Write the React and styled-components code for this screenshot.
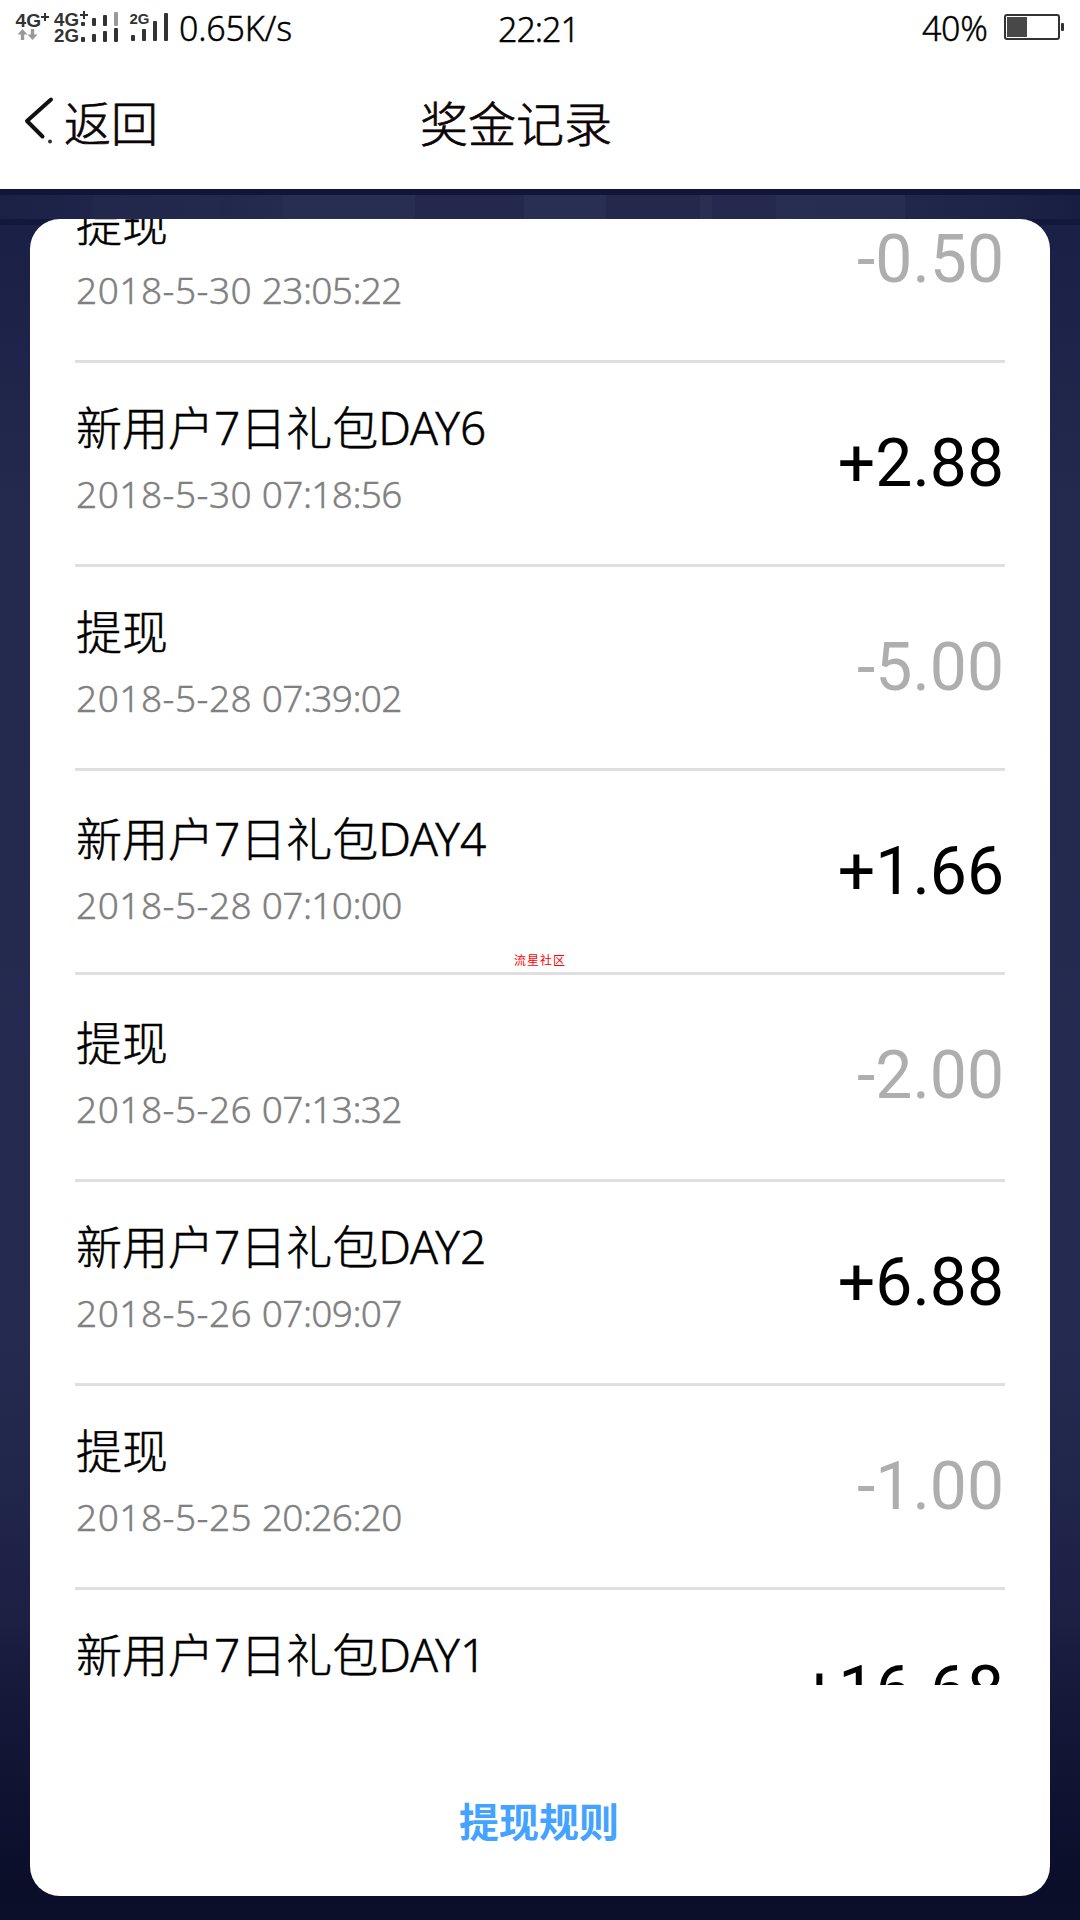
import React from 'react';
// Style
import styled, { createGlobalStyle } from 'styled-components';

const records = [
  { title: '提现', date: '2018-5-30', time: '23:05:22', amount: '-0.50' },
  { title: '新用户7日礼包DAY6', date: '2018-5-30', time: '07:18:56', amount: '+2.88' },
  { title: '提现', date: '2018-5-28', time: '07:39:02', amount: '-5.00' },
  { title: '新用户7日礼包DAY4', date: '2018-5-28', time: '07:10:00', amount: '+1.66', shift: 3 },
  { title: '提现', date: '2018-5-26', time: '07:13:32', amount: '-2.00', shift: 3, height: 207 },
  { title: '新用户7日礼包DAY2', date: '2018-5-26', time: '07:09:07', amount: '+6.88' },
  { title: '提现', date: '2018-5-25', time: '20:26:20', amount: '-1.00' },
  { title: '新用户7日礼包DAY1', amount: '+16.68' },
];

const Signal = () => (
  <SignalIcon viewBox='0 0 172 48'>
    <g fill='#333' fontFamily='Liberation Sans, sans-serif' fontWeight='700'>
      <text x='15.5' y='26.5' fontSize='19' textLength='25.5' lengthAdjust='spacingAndGlyphs'>4G</text>
      <text x='54' y='25.5' fontSize='18.5' textLength='25' lengthAdjust='spacingAndGlyphs'>4G</text>
      <text x='54' y='41.5' fontSize='18' textLength='25' lengthAdjust='spacingAndGlyphs'>2G</text>
      <text x='129.5' y='24' fontSize='15' textLength='20' lengthAdjust='spacingAndGlyphs'>2G</text>
    </g>
    <path d='M45 13v8M41 17h8M84 11v8M80 15h8' stroke='#333' strokeWidth='2' />
    <path d='M22.5 29l5 5.5h-3.3V40h-3.4v-5.5h-3.3zM32.5 40l-5-5.5h3.3V29h3.4v5.5h3.3z' fill='#999' />
    <g fill='#333'>
      <rect x='81' y='22' width='4' height='4' rx='1' />
      <rect x='92' y='18' width='4' height='8' rx='1' />
      <rect x='103' y='15' width='4' height='11' rx='1' />
      <rect x='114' y='12' width='4' height='14' rx='1' fill='#999' />
      <rect x='81' y='37' width='4' height='5' rx='1' />
      <rect x='92' y='34' width='4' height='8' rx='1' />
      <rect x='103' y='31' width='4' height='11' rx='1' />
      <rect x='114' y='28' width='4' height='14' rx='1' />
      <rect x='131' y='35' width='4' height='6' rx='1' />
      <rect x='142' y='29' width='4' height='12' rx='1' />
      <rect x='153' y='21' width='4' height='20' rx='1' />
      <rect x='164' y='13' width='4' height='28' rx='1' />
    </g>
  </SignalIcon>
);

const App = () => {
  return (
    <Page>
      <GlobalStyle />
      <StatusBar>
        <Signal />
        <Speed>0.65K/s</Speed>
        <Clock>22:21</Clock>
        <Percent>40%</Percent>
        <Battery viewBox='0 0 60 26'>
          <rect x='1' y='1' width='54' height='24' rx='2' fill='none' stroke='#333' strokeWidth='2' />
          <rect x='3' y='3' width='20' height='20' fill='#484848' />
          <rect x='57' y='9' width='3' height='8' rx='1' fill='#333' />
        </Battery>
      </StatusBar>
      <Header>
        <Chevron viewBox='0 0 34 52'>
          <path d='M29 6.5L5 28L20.5 43.5' fill='none' stroke='#111' strokeWidth='4' strokeLinecap='round' strokeLinejoin='round' />
          <circle cx='28' cy='48.5' r='2' fill='#333' />
        </Chevron>
        <Back>返回</Back>
        <Heading>奖金记录</Heading>
      </Header>
      <Backdrop>
        <Card>
          <Viewport>
            <List>
              {records.map(({ title, date, time, amount, shift, height }) => (
                <Row key={amount} $height={height}>
                  <Info $shift={shift}>
                    <Title>{title}</Title>
                    {date && (
                      <Stamp>
                        <Day>{date}</Day> <Time>{time}</Time>
                      </Stamp>
                    )}
                  </Info>
                  <Amount $income={amount.startsWith('+')}>{amount}</Amount>
                </Row>
              ))}
            </List>
          </Viewport>
          <Rules>提现规则</Rules>
        </Card>
      </Backdrop>
      <Watermark>流星社区</Watermark>
    </Page>
  );
};

const GlobalStyle = createGlobalStyle`
  * {
    margin: 0;
    padding: 0;
    box-sizing: border-box;
  }
  body {
    background: #fff;
    font-family: 'Noto Sans', 'Noto Sans CJK SC', sans-serif;
    font-weight: 300;
  }
`;

const Page = styled.div`
  position: relative;
  width: 1080px;
  height: 1920px;
  overflow: hidden;
  display: flex;
  flex-direction: column;
`;

const StatusBar = styled.div`
  display: flex;
  height: 56px;
  color: #000;
  font-size: 34px;
  line-height: 56px;
  white-space: nowrap;
  -webkit-text-stroke: 0.4px;
`;

const SignalIcon = styled.svg`
  width: 172px;
  height: 48px;
  -webkit-text-stroke: 0;
`;

const Speed = styled.span`
  width: 326px;
  padding-left: 7px;
  letter-spacing: -0.2px;
`;

const Clock = styled.span`
  width: 424px;
  padding-top: 1px;
  letter-spacing: -1px;
`;

const Percent = styled.span`
  width: 82px;
  letter-spacing: -0.3px;
`;

const Battery = styled.svg`
  width: 60px;
  height: 26px;
  margin-top: 14px;
`;

const Header = styled.header`
  display: flex;
  height: 133px;
  padding-left: 22px;
  font-family: 'Noto Sans CJK SC', sans-serif;
  font-size: 48px;
  line-height: 72px;
  color: #0d0405;
  -webkit-text-stroke: 0.7px;
`;

const Chevron = styled.svg`
  width: 34px;
  height: 52px;
  margin-top: 37px;
`;

const Back = styled.span`
  width: 356px;
  padding: 29px 0 0 8px;
  font-size: 47px;
`;

const Heading = styled.h1`
  padding: 29px 0 0 8px;
  font-size: 48px;
  font-weight: 300;
`;

// Night sky behind the card, darker towards the bottom
const Backdrop = styled.main`
  flex: 1;
  padding: 30px 30px 24px;
  background:
    linear-gradient(#0f163a, #0f163a) 0 0 / 100% 6px no-repeat,
    linear-gradient(
      90deg,
      #1b2045 0, #1f244a 93px, #22274c 93px, #23284d 221px,
      #22274c 221px, #252a4f 283px, #282d52 283px, #282d52 415px,
      #23284c 415px, #23284c 524px, #292e53 524px, #292e53 606px,
      #24294c 606px, #24294c 700px, #2a2f52 700px, #2a2f52 712px,
      #24294d 712px, #24294d 776px, #282d52 776px, #272c51 905px,
      #21264b 905px, #1e2348 995px, #1e2348 995px, #181d42 1080px
    ) 0 6px / 100% 24px no-repeat,
    linear-gradient(#12173c, #12173c) 0 30px / 100% 6px no-repeat,
    linear-gradient(
      #1a1f45 0, #1b2046 60px, #242a4e 320px, #252b50 1150px,
      #20254a 1310px, #1d1f43 1430px, #141737 1530px, #0e1230 1630px,
      #0b0e29 1700px, #0c0f2a 1731px
    );
`;

const Card = styled.section`
  display: flex;
  flex-direction: column;
  height: 1677px;
  border-radius: 30px;
  background: #fff;
  overflow: hidden;
`;

const Viewport = styled.div`
  height: 1466px;
  padding: 0 45px;
  overflow: hidden;
`;

// Scrolled by 60px, the first row is cut by the card
const List = styled.ul`
  margin-top: -60px;
  list-style: none;
`;

const Row = styled.li`
  display: flex;
  justify-content: space-between;
  height: ${({ $height = 204 }) => $height}px;
  border-bottom: 3px solid #dfdfdf;
`;

const Info = styled.div`
  padding: ${({ $shift = 0 }) => 34 + $shift}px 0 0 1px;
`;

const Title = styled.h2`
  font-size: 46px;
  font-weight: 300;
  line-height: 60px;
  color: #000;
  -webkit-text-stroke: 0.5px;
`;

const Stamp = styled.p`
  margin-top: 12px;
  font-size: 37px;
  line-height: 50px;
  white-space: nowrap;
  color: #808080;
  -webkit-text-stroke: 0.4px;
`;

const Day = styled.span`
  letter-spacing: 0.5px;
`;

const Time = styled.span`
  letter-spacing: -0.6px;
`;

const Amount = styled.span`
  padding: 61px 1px 0 0;
  font-family: Roboto, sans-serif;
  font-size: 66px;
  font-weight: 400;
  line-height: 80px;
  color: ${({ $income }) => ($income ? '#000' : '#aeaeae')};
`;

const Rules = styled.a`
  padding: 106px 2px 0 0;
  font-family: 'Noto Sans CJK SC', sans-serif;
  font-size: 40px;
  font-weight: 700;
  line-height: 58px;
  text-align: center;
  color: #43a3ff;
`;

const Watermark = styled.span`
  position: absolute;
  left: 514px;
  top: 951px;
  font-family: 'Noto Sans CJK SC', sans-serif;
  font-size: 12px;
  font-weight: 400;
  letter-spacing: 1px;
  line-height: 18px;
  color: #f00;
`;

export default App;
